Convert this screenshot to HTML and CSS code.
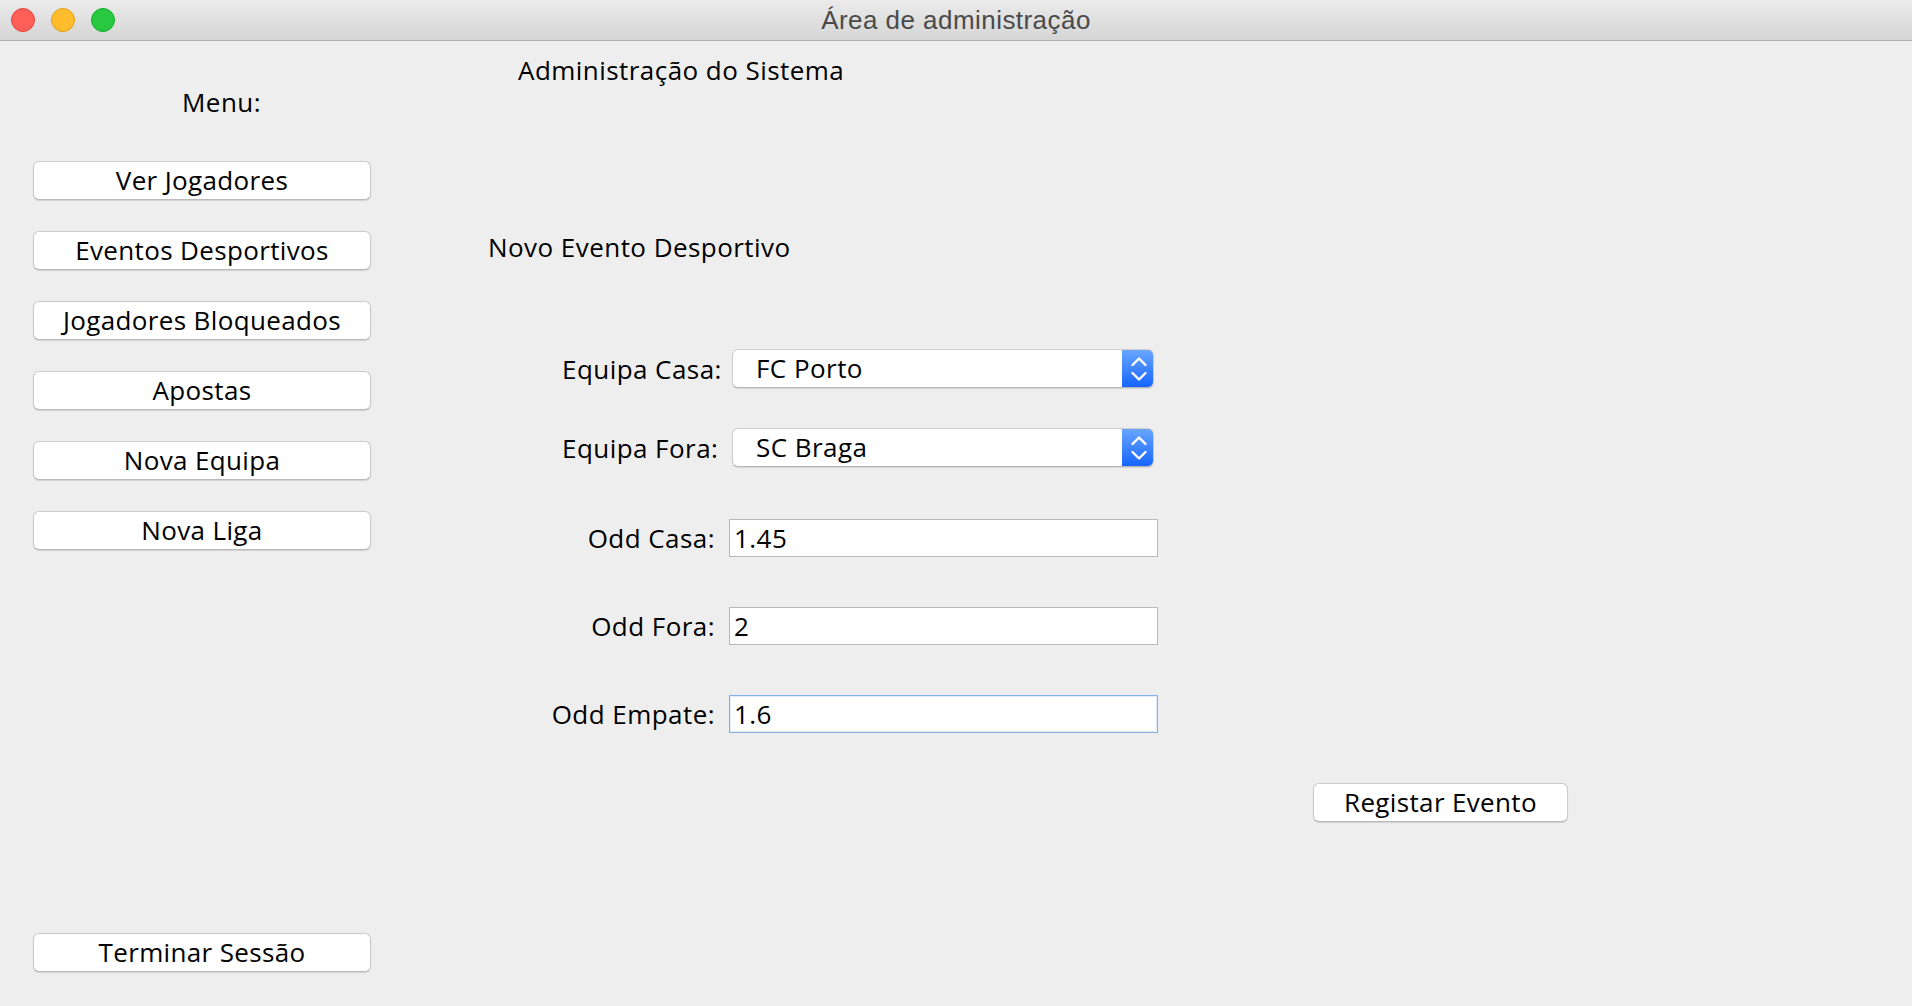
FILE: index.html
```html
<!DOCTYPE html>
<html lang="pt">
<head>
<meta charset="utf-8">
<title>Área de administração</title>
<link rel="stylesheet" href="styles.css">
</head>
<body>
<div class="window">
  <header class="titlebar">
    <div class="lights">
      <span class="light light--red"></span>
      <span class="light light--yellow"></span>
      <span class="light light--green"></span>
    </div>
    <div class="title">Área de administração</div>
    <div class="titlebar-spacer"></div>
  </header>
  <div class="content">
    <aside class="sidebar">
      <div class="menu-label">Menu:</div>
      <nav class="menu">
        <button class="btn">Ver Jogadores</button>
        <button class="btn">Eventos Desportivos</button>
        <button class="btn">Jogadores Bloqueados</button>
        <button class="btn">Apostas</button>
        <button class="btn">Nova Equipa</button>
        <button class="btn">Nova Liga</button>
      </nav>
      <button class="btn btn--logout">Terminar Sessão</button>
    </aside>
    <main class="main">
      <div class="page-title">Administração do Sistema</div>
      <div class="section-title">Novo Evento Desportivo</div>
      <div class="form">
        <div class="row row--select row--first">
          <label class="label label--select">Equipa Casa:</label>
          <div class="combo">
            <span class="combo-value">FC Porto</span>
            <span class="combo-arrow">
              <svg width="32" height="39" viewBox="0 0 32 39"><polyline points="10.5,16 17,9.5 23.5,16" fill="none" stroke="#fff" stroke-width="2.4" stroke-linecap="round" stroke-linejoin="round"/><polyline points="10.5,24 17,30.5 23.5,24" fill="none" stroke="#fff" stroke-width="2.4" stroke-linecap="round" stroke-linejoin="round"/></svg>
            </span>
          </div>
        </div>
        <div class="row row--select">
          <label class="label label--select">Equipa Fora:</label>
          <div class="combo">
            <span class="combo-value">SC Braga</span>
            <span class="combo-arrow">
              <svg width="32" height="39" viewBox="0 0 32 39"><polyline points="10.5,16 17,9.5 23.5,16" fill="none" stroke="#fff" stroke-width="2.4" stroke-linecap="round" stroke-linejoin="round"/><polyline points="10.5,24 17,30.5 23.5,24" fill="none" stroke="#fff" stroke-width="2.4" stroke-linecap="round" stroke-linejoin="round"/></svg>
            </span>
          </div>
        </div>
        <div class="row row--field row--after-select">
          <label class="label">Odd Casa:</label>
          <div class="field">1.45</div>
        </div>
        <div class="row row--field">
          <label class="label">Odd Fora:</label>
          <div class="field">2</div>
        </div>
        <div class="row row--field">
          <label class="label">Odd Empate:</label>
          <div class="field field--focus">1.6</div>
        </div>
      </div>
      <div class="actions">
        <button class="btn btn--submit">Registar Evento</button>
      </div>
    </main>
  </div>
</div>
</body>
</html>
```

FILE: styles.css
```css
* { box-sizing: border-box; }

html, body {
  margin: 0;
  padding: 0;
  width: 1912px;
  height: 1006px;
  overflow: hidden;
  background: #eeeeee;
}

body {
  font-family: "Open Sans", "DejaVu Sans", sans-serif;
  font-size: 26px;
  letter-spacing: 0.45px;
  color: #000;
}

.window {
  display: flex;
  flex-direction: column;
  height: 1006px;
}

.titlebar {
  height: 41px;
  flex: 0 0 41px;
  display: grid;
  grid-template-columns: 1fr auto 1fr;
  align-items: center;
  background: linear-gradient(#ebebeb, #d5d5d5);
  border-bottom: 1px solid #b0b0b0;
}

.lights {
  display: flex;
  gap: 16px;
  padding-left: 11px;
}

.light {
  width: 24px;
  height: 24px;
  border-radius: 50%;
  display: block;
}
.light--red { background: #ff5f57; border: 1px solid #e2463f; }
.light--yellow { background: #ffbd2e; border: 1px solid #e1a116; }
.light--green { background: #28c840; border: 1px solid #14ae2a; }

.title {
  font-family: "Liberation Sans", Arial, sans-serif;
  font-size: 26px;
  letter-spacing: 0.45px;
  line-height: 40px;
  color: #4a4a4a;
}

.content {
  flex: 1;
  display: flex;
}

.sidebar {
  width: 371px;
  padding-left: 33px;
  padding-bottom: 34px;
  display: flex;
  flex-direction: column;
}

.menu-label {
  line-height: 32px;
  margin-top: 45px;
  padding-left: 149px;
}

.menu {
  display: flex;
  flex-direction: column;
  gap: 31px;
  margin-top: 43px;
}

.btn {
  font-family: inherit;
  font-size: 26px;
  letter-spacing: 0.35px;
  color: #000;
  width: 338px;
  height: 39px;
  line-height: 37px;
  padding: 0;
  background: #fff;
  border: 1px solid #cacaca;
  border-bottom-color: #b9b9b9;
  border-radius: 6px;
  box-shadow: 0 1px 1px rgba(0, 0, 0, 0.12);
  text-align: center;
}

.btn--logout {
  margin-top: auto;
}

.main {
  flex: 1;
  padding-left: 117px;
}

.page-title {
  line-height: 32px;
  margin-top: 13px;
  margin-left: 30px;
}

.section-title {
  line-height: 32px;
  margin-top: 145px;
}

.form {
  margin-top: 86px;
}

.row {
  display: grid;
  grid-template-columns: 241px 429px;
  align-items: center;
}

.row--select { margin-top: 40px; }
.row--first { margin-top: 0; }
.row--field { margin-top: 50px; }
.row--after-select { margin-top: 52px; }

.label {
  text-align: right;
  padding-right: 14px;
  white-space: nowrap;
}
.label--select {
  text-align: left;
  padding-right: 0;
  padding-left: 74px;
}

.combo {
  margin-left: 3px;
  width: 422px;
  height: 39px;
  display: flex;
  background: #fff;
  border: 1px solid #cdcdcd;
  border-bottom-color: #b5b5b5;
  border-radius: 6px;
  box-shadow: 0 1px 1px rgba(0, 0, 0, 0.10);
  overflow: hidden;
}

.combo-value {
  flex: 1;
  padding-left: 23px;
  line-height: 37px;
}

.combo-arrow {
  width: 32px;
  height: 39px;
  margin-top: -1px;
  margin-right: -1px;
  background: linear-gradient(#6ba8ff, #1463ff);
  display: block;
}
.combo-arrow svg { display: block; }

.field {
  width: 429px;
  height: 38px;
  line-height: 36px;
  padding-left: 4px;
  background: #fff;
  border: 1px solid #b9b9b9;
}

.field--focus {
  border-color: #86aee8;
  box-shadow: inset 0 0 0 1px rgba(134, 174, 232, 0.25);
}

.actions {
  margin-top: 50px;
  padding-left: 825px;
}

.btn--submit {
  width: 255px;
}
```
